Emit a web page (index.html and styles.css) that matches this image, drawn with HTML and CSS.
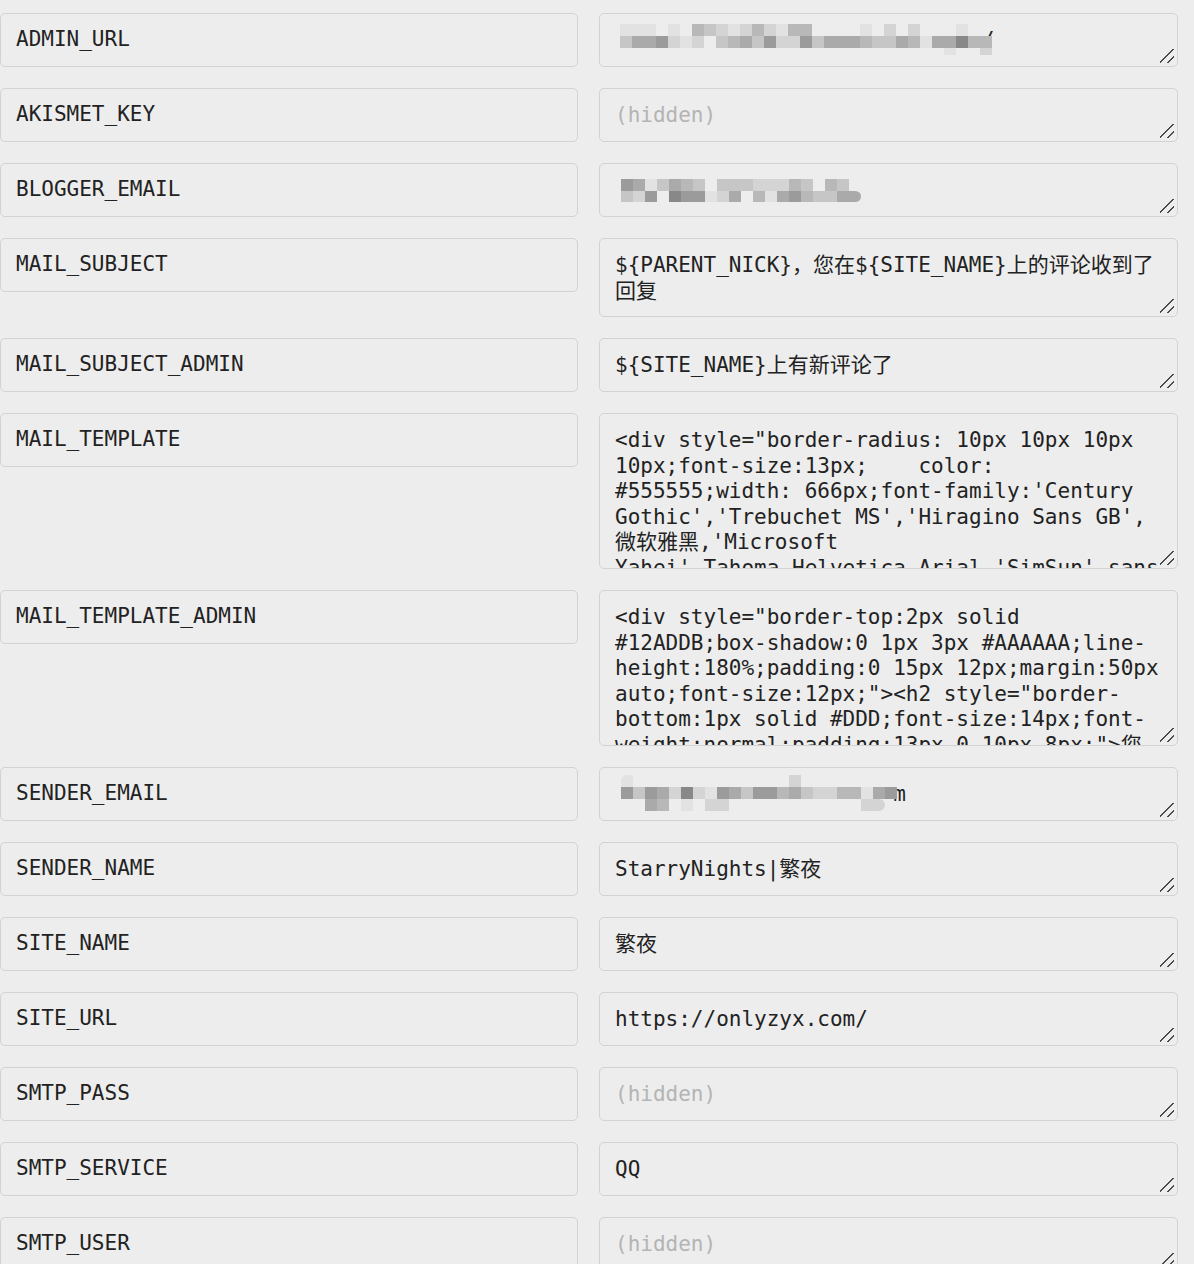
FILE: index.html
```html
<!DOCTYPE html>
<html lang="zh-CN">
<head>
<meta charset="utf-8">
<title>Environment variables</title>
<link rel="stylesheet" href="styles.css">
</head>
<body>
<div class="form">
  <div class="key">ADMIN_URL</div>
  <div class="val">
    <textarea class="ta h1">                             /</textarea>
    <div class="mosaic mz-admin">
      <div class="mrow"><span class="k1"></span><span class="k1"></span><span class="k1"></span><span class="k0"></span><span class="k1"></span><span class="k0"></span><span class="k4"></span><span class="k3"></span><span class="k2"></span><span class="k1"></span><span class="k2"></span><span class="k4"></span><span class="k2"></span><span class="k1"></span><span class="k4"></span><span class="k4"></span><span class="k0"></span><span class="k0"></span><span class="k0"></span><span class="k0"></span><span class="k1"></span><span class="k0"></span><span class="k2"></span><span class="k0"></span><span class="k2"></span><span class="k0"></span><span class="k0"></span><span class="k0"></span><span class="k1"></span><span class="k0"></span><span class="k0"></span></div>
      <div class="mrow"><span class="k3"></span><span class="k5"></span><span class="k5"></span><span class="k6"></span><span class="k2"></span><span class="k1"></span><span class="k2"></span><span class="k0"></span><span class="k3"></span><span class="k4"></span><span class="k5"></span><span class="k3"></span><span class="k6"></span><span class="k2"></span><span class="k2"></span><span class="k6"></span><span class="k3"></span><span class="k5"></span><span class="k5"></span><span class="k5"></span><span class="k4"></span><span class="k3"></span><span class="k3"></span><span class="k5"></span><span class="k4"></span><span class="k1"></span><span class="k5"></span><span class="k5"></span><span class="k7"></span><span class="k4"></span><span class="k4"></span></div>
      <div class="mrow"><span class="k0"></span><span class="k0"></span><span class="k0"></span><span class="k0"></span><span class="k0"></span><span class="k0"></span><span class="k0"></span><span class="k0"></span><span class="k0"></span><span class="k0"></span><span class="k0"></span><span class="k0"></span><span class="k0"></span><span class="k0"></span><span class="k0"></span><span class="k0"></span><span class="k0"></span><span class="k0"></span><span class="k0"></span><span class="k0"></span><span class="k0"></span><span class="k0"></span><span class="k0"></span><span class="k0"></span><span class="k0"></span><span class="k0"></span><span class="k0"></span><span class="k1 half"></span><span class="k0"></span><span class="k0"></span><span class="k2 half"></span></div>
    </div>
  </div>

  <div class="key">AKISMET_KEY</div>
  <div class="val"><textarea class="ta h1" placeholder="(hidden)"></textarea></div>

  <div class="key">BLOGGER_EMAIL</div>
  <div class="val">
    <textarea class="ta h1"></textarea>
    <div class="mosaic mz-blogger">
      <div class="mrow"><span class="k6"></span><span class="k5"></span><span class="k1"></span><span class="k3"></span><span class="k5"></span><span class="k4"></span><span class="k3"></span><span class="k0"></span><span class="k3"></span><span class="k3"></span><span class="k3"></span><span class="k2"></span><span class="k2"></span><span class="k2"></span><span class="k4"></span><span class="k3"></span><span class="k0"></span><span class="k4"></span><span class="k3"></span><span class="k0"></span></div>
      <div class="mrow"><span class="k3"></span><span class="k2"></span><span class="k6"></span><span class="k0"></span><span class="k7"></span><span class="k6"></span><span class="k6"></span><span class="k1"></span><span class="k2"></span><span class="k5"></span><span class="k0"></span><span class="k4"></span><span class="k1"></span><span class="k5"></span><span class="k6"></span><span class="k4"></span><span class="k3"></span><span class="k3"></span><span class="k5"></span><span class="k5 end"></span></div>
    </div>
  </div>

  <div class="key">MAIL_SUBJECT</div>
  <div class="val"><textarea class="ta h2">${PARENT_NICK}，您在${SITE_NAME}上的评论收到了回复</textarea></div>

  <div class="key">MAIL_SUBJECT_ADMIN</div>
  <div class="val"><textarea class="ta h1">${SITE_NAME}上有新评论了</textarea></div>

  <div class="key">MAIL_TEMPLATE</div>
  <div class="val"><textarea class="ta h6">&lt;div style="border-radius: 10px 10px 10px 10px;font-size:13px;    color: #555555;width: 666px;font-family:'Century Gothic','Trebuchet MS','Hiragino Sans GB',微软雅黑,'Microsoft Yahei',Tahoma,Helvetica,Arial,'SimSun',sans-serif;margin:50px auto;border:1px solid #eee;max-width:100%;background: #ffffff repeating-linear-gradient(-45deg,#fff,#fff 1.125rem,transparent 1.125rem,transparent 2.25rem);box-shadow: 0 1px 5px rgba(0, 0, 0, 0.15);"&gt;</textarea></div>

  <div class="key">MAIL_TEMPLATE_ADMIN</div>
  <div class="val"><textarea class="ta h6">&lt;div style="border-top:2px solid #12ADDB;box-shadow:0 1px 3px #AAAAAA;line-height:180%;padding:0 15px 12px;margin:50px auto;font-size:12px;"&gt;&lt;h2 style="border-bottom:1px solid #DDD;font-size:14px;font-weight:normal;padding:13px 0 10px 8px;"&gt;您在&lt;a style="text-decoration:none;color: #12ADDB;" href="${SITE_URL}" target="_blank"&gt;${SITE_NAME}&lt;/a&gt;上的文章有了新的评论&lt;/h2&gt;</textarea></div>

  <div class="key">SENDER_EMAIL</div>
  <div class="val">
    <textarea class="ta h1">                      m</textarea>
    <div class="mosaic mz-sender">
      <div class="mrow"><span class="k1 start"></span><span class="k0"></span><span class="k0"></span><span class="k0"></span><span class="k0"></span><span class="k0"></span><span class="k0"></span><span class="k0"></span><span class="k0"></span><span class="k0"></span><span class="k0"></span><span class="k0"></span><span class="k0"></span><span class="k0"></span><span class="k2"></span><span class="k0"></span><span class="k0"></span><span class="k0"></span><span class="k0"></span><span class="k0"></span><span class="k0"></span><span class="k0"></span><span class="k0"></span></div>
      <div class="mrow"><span class="k6"></span><span class="k3"></span><span class="k6"></span><span class="k5"></span><span class="k2"></span><span class="k7"></span><span class="k2"></span><span class="k1"></span><span class="k6"></span><span class="k5"></span><span class="k3"></span><span class="k6"></span><span class="k6"></span><span class="k4"></span><span class="k5"></span><span class="k3"></span><span class="k2"></span><span class="k2"></span><span class="k4"></span><span class="k4"></span><span class="k1"></span><span class="k5"></span><span class="k6"></span></div>
      <div class="mrow"><span class="k0"></span><span class="k0"></span><span class="k5"></span><span class="k4"></span><span class="k0"></span><span class="k1"></span><span class="k0"></span><span class="k2"></span><span class="k2"></span><span class="k0"></span><span class="k0"></span><span class="k0"></span><span class="k0"></span><span class="k0"></span><span class="k0"></span><span class="k0"></span><span class="k0"></span><span class="k0"></span><span class="k0"></span><span class="k0"></span><span class="k2"></span><span class="k2 end"></span><span class="k0"></span></div>
    </div>
  </div>

  <div class="key">SENDER_NAME</div>
  <div class="val"><textarea class="ta h1">StarryNights|繁夜</textarea></div>

  <div class="key">SITE_NAME</div>
  <div class="val"><textarea class="ta h1">繁夜</textarea></div>

  <div class="key">SITE_URL</div>
  <div class="val"><textarea class="ta h1">https://onlyzyx.com/</textarea></div>

  <div class="key">SMTP_PASS</div>
  <div class="val"><textarea class="ta h1" placeholder="(hidden)"></textarea></div>

  <div class="key">SMTP_SERVICE</div>
  <div class="val"><textarea class="ta h1">QQ</textarea></div>

  <div class="key">SMTP_USER</div>
  <div class="val"><textarea class="ta h1" placeholder="(hidden)"></textarea></div>
</div>
</body>
</html>
```

FILE: styles.css
```css
html, body {
  margin: 0;
  padding: 0;
  background: #ededed;
}

body {
  font-family: "DejaVu Sans Mono", "Noto Sans CJK SC", monospace;
  font-size: 21px;
  color: #222222;
}

.form {
  display: grid;
  grid-template-columns: 578px 579px;
  column-gap: 21px;
  row-gap: 21px;
  padding-top: 13px;
  align-items: start;
}

.key {
  box-sizing: border-box;
  height: 54px;
  display: flex;
  align-items: center;
  padding: 0 15px;
  border: 1px solid #d2d2d2;
  border-radius: 5px;
  font-size: 21px;
  line-height: 25.5px;
  color: #222222;
}

.val {
  position: relative;
  height: 100%;
}

.ta {
  display: block;
  box-sizing: border-box;
  width: 579px;
  margin: 0;
  padding: 14px 15px 12px;
  border: 1px solid #d2d2d2;
  border-radius: 5px;
  background-color: #ededed;
  background-image: linear-gradient(to bottom right,
      transparent 44%, #4a4a4a 44%, #4a4a4a 53%, transparent 53%,
      transparent 72%, #4a4a4a 72%, #4a4a4a 81%, transparent 81%);
  background-repeat: no-repeat;
  background-size: 14px 14px;
  background-position: right 3px bottom 3px;
  color: #222222;
  font-family: "DejaVu Sans Mono", "Noto Sans CJK SC", monospace;
  font-size: 21px;
  line-height: 25.5px;
  outline: none;
  resize: none;
  scrollbar-width: none;
  overflow: auto;
}

.ta::-webkit-scrollbar {
  display: none;
}

.ta::placeholder {
  color: #b4b4b4;
}

.h1 { height: 54px; }
.h2 { height: 79px; }
.h6 { height: 156px; }

.mosaic {
  position: absolute;
  display: flex;
  flex-direction: column;
  pointer-events: none;
}

.mz-admin { top: 11px; left: 21px; }
.mz-blogger { top: 16px; left: 22px; }
.mz-sender { top: 8px; left: 22px; }

.mrow {
  display: flex;
}

.mrow span {
  display: block;
  width: 12px;
  height: 12px;
}

.mrow .half { height: 7px; }

.mz-blogger .mrow span { height: 11.5px; }

.mrow .end { border-radius: 0 6px 6px 0; }
.mrow .start { border-radius: 6px 0 0 0; }

.k0 { background: transparent; }
.k1 { background: #e2e2e2; }
.k2 { background: #d4d4d4; }
.k3 { background: #c6c6c6; }
.k4 { background: #b8b8b8; }
.k5 { background: #aaaaaa; }
.k6 { background: #9b9b9b; }
.k7 { background: #888888; }
```
